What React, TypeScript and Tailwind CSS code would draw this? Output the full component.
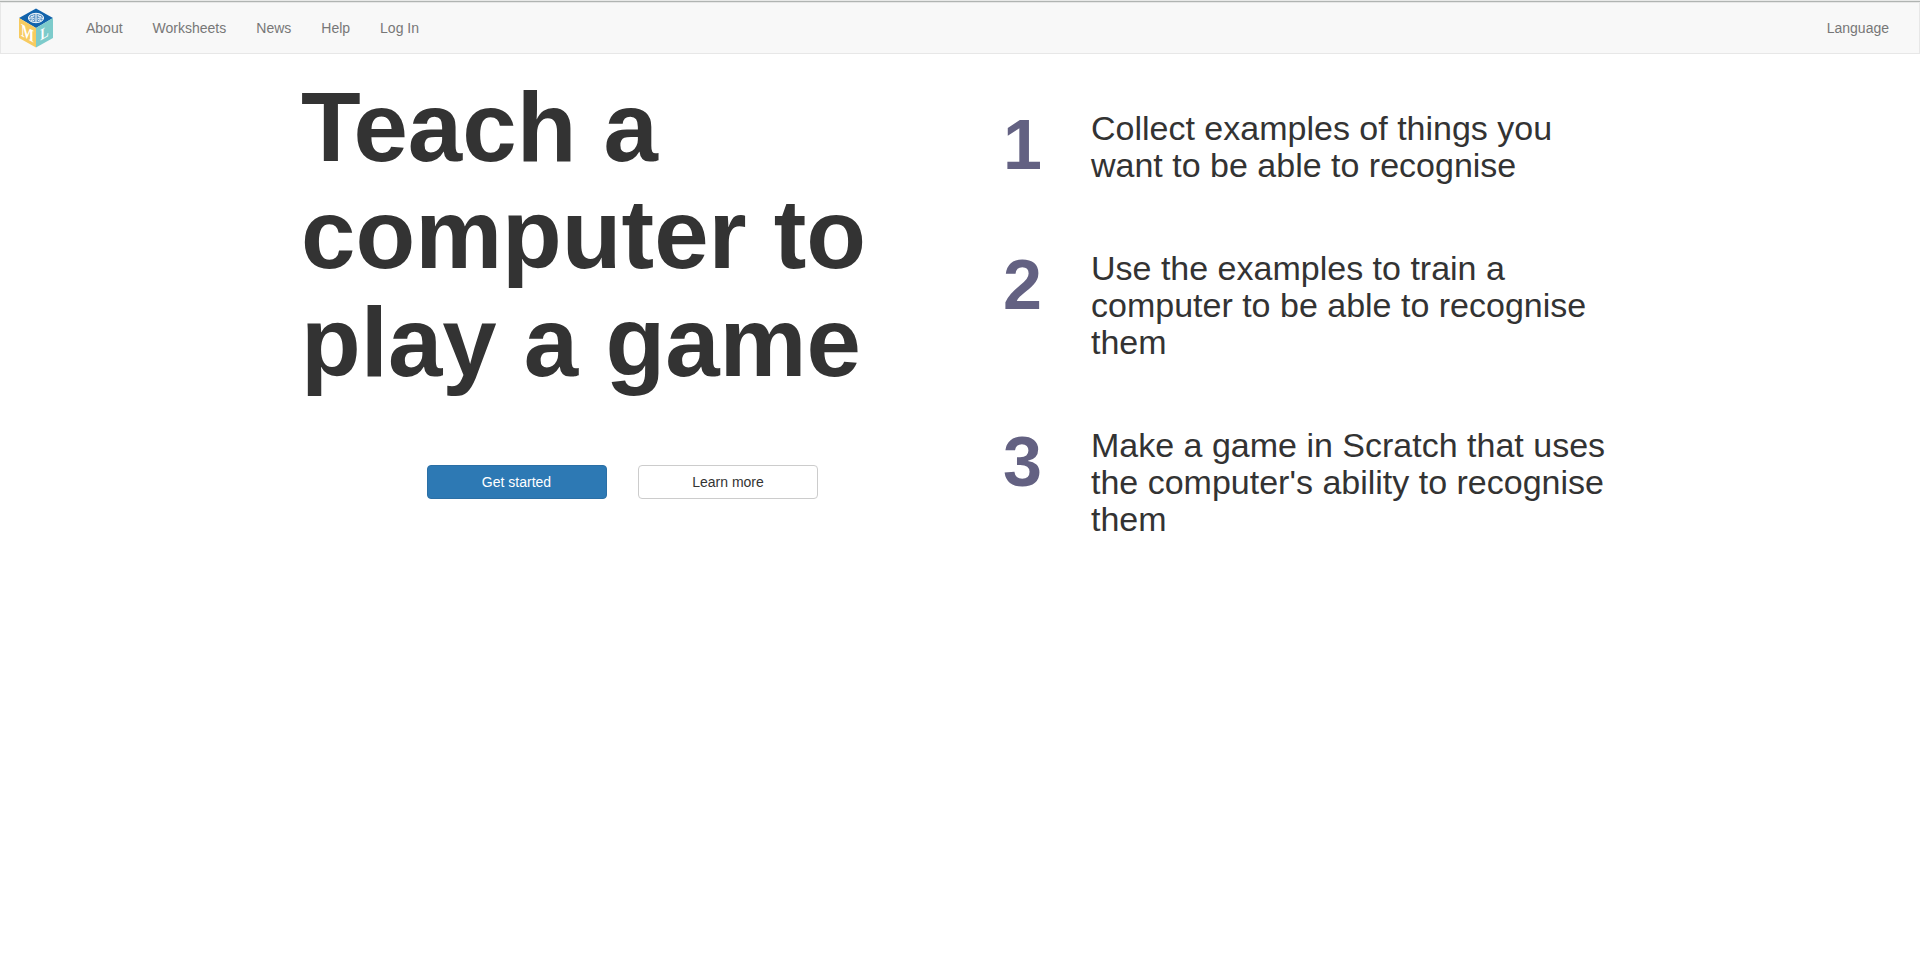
const links = ["About", "Worksheets", "News", "Help", "Log In"];

const steps = [
  "Collect examples of things you want to be able to recognise",
  "Use the examples to train a computer to be able to recognise them",
  "Make a game in Scratch that uses the computer's ability to recognise them",
];

function Logo() {
  return (
    <svg className="block h-[40px] w-[36px]" viewBox="0 0 36 40">
      <path d="M18 .5 35 10 18 20 1 10Z" fill="#1263ac" />
      <path d="M1 10 18 20V39.5L1 30Z" fill="#f7cb60" />
      <path d="M35 10 18 20V39.5L35 30Z" fill="#7dcbcb" />
      <ellipse cx="18" cy="10" rx="8" ry="5" fill="#fff" fillOpacity=".35" />
      <g fill="none" stroke="#fff" strokeWidth=".9">
        <ellipse cx="18" cy="10" rx="7.6" ry="4.7" />
        <path d="M18 5.500V14.500M14.500 6.500C17 7.500 16 9 13 8.500M11 10.500C13 9.500 15 10 16.500 11M13 13C13 11.500 15 11.500 16 13M21.500 6.500C19 7.500 20 9 23 8.500M25 10.500C23 9.500 21 10 19.500 11M23 13C23 11.500 21 11.500 20 13" />
      </g>
      <text transform="matrix(.76 .43 0 1 3 27.500)" fontFamily="Liberation Serif, serif" fontWeight="700" fontSize="18" fill="#fff">M</text>
      <text transform="matrix(.78 -.44 0 1 22.300 32.600)" fontFamily="Liberation Serif, serif" fontWeight="700" fontSize="16" fill="#fff">L</text>
    </svg>
  );
}

export default function App() {
  return (
    <div className="min-h-screen bg-white font-['Liberation_Sans',Arial,sans-serif] text-sm leading-5 text-[#333]">
      <div className="h-px bg-[#e8e9e8]" />
      <div className="h-px bg-[#b0b4b2]" />
      <nav className="flex h-[52px] items-center justify-between border border-[#e7e7e7] bg-[#f8f8f8] pr-[30px] pl-[17px] text-[#777]">
        <div className="flex items-center">
          <Logo />
          <ul className="ml-[32px] flex gap-[30px]">
            {links.map((l) => (
              <li key={l}><a href="#">{l}</a></li>
            ))}
          </ul>
        </div>
        <a href="#">Language</a>
      </nav>
      <main className="flex pl-[300px]">
        <section className="w-[703px] pt-[20px]">
          <h1 className="ml-px w-[620px] text-[97.8px] leading-[107.25px] font-bold">Teach a computer to play a game</h1>
          <div className="mt-[69px] flex gap-[31px] pl-[127px]">
            <button className="h-[34px] w-[180px] rounded border border-[#2b6fa5] bg-[#2d79b4] pr-px text-white">Get started</button>
            <button className="h-[34px] w-[180px] rounded border border-[#ccc] bg-white">Learn more</button>
          </div>
        </section>
        <ol className="flex flex-col gap-[66px] pt-[56px]">
          {steps.map((s, i) => (
            <li key={s} className="flex">
              <span className="mt-[-3px] h-[60px] w-[88px] text-[70px] leading-[77px] font-bold text-[#636182]">{i + 1}</span>
              <p className="w-[530px] text-[34px] leading-[37px]">{s}</p>
            </li>
          ))}
        </ol>
      </main>
    </div>
  );
}
